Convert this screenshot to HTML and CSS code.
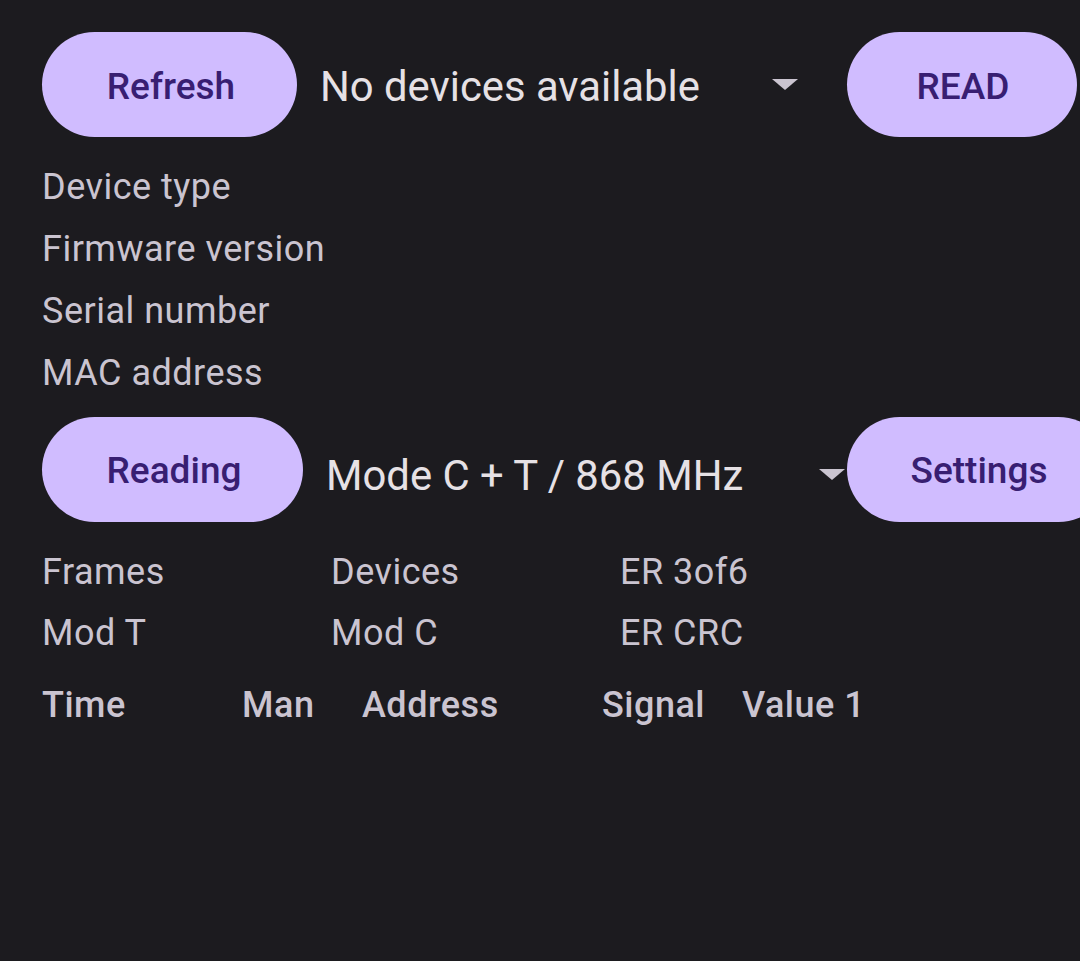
FILE: index.html
```html
<!DOCTYPE html>
<html lang="en">
<head>
<meta charset="utf-8">
<title>Reader</title>
<link rel="stylesheet" href="styles.css">
</head>
<body>
<div class="screen">
  <div class="toolbar toolbar-top">
    <button class="pill pill-refresh">Refresh</button>
    <div class="spinner spinner-devices">
      <span class="spinner-text">No devices available</span>
      <span class="caret"></span>
    </div>
    <button class="pill pill-read">READ</button>
  </div>

  <div class="info">
    <div class="info-line">Device type</div>
    <div class="info-line">Firmware version</div>
    <div class="info-line">Serial number</div>
    <div class="info-line">MAC address</div>
  </div>

  <div class="toolbar toolbar-mode">
    <button class="pill pill-reading">Reading</button>
    <div class="spinner spinner-mode">
      <span class="spinner-text spinner-text-mode">Mode C + T / 868 MHz</span>
      <span class="caret"></span>
    </div>
    <button class="pill pill-settings">Settings</button>
  </div>

  <div class="stats">
    <div class="stat">Frames</div>
    <div class="stat">Devices</div>
    <div class="stat">ER 3of6</div>
    <div class="stat">Mod T</div>
    <div class="stat">Mod C</div>
    <div class="stat">ER CRC</div>
  </div>

  <div class="table-head">
    <div class="th">Time</div>
    <div class="th">Man</div>
    <div class="th">Address</div>
    <div class="th">Signal</div>
    <div class="th">Value 1</div>
  </div>
</div>
</body>
</html>
```

FILE: styles.css
```css
html, body {
  margin: 0;
  padding: 0;
  background: #1c1b1f;
}

body {
  font-family: Roboto, "Noto Sans", "Liberation Sans", sans-serif;
  color: #cac4d0;
}

.screen {
  width: 1080px;
  height: 961px;
  overflow: hidden;
  box-sizing: border-box;
  padding: 32px 0 0 42px;
  background: #1c1b1f;
}

.toolbar {
  display: flex;
  align-items: center;
  width: max-content;
}

.pill {
  flex: none;
  box-sizing: border-box;
  height: 105px;
  border: none;
  border-radius: 53px;
  background: #d0bcff;
  color: #381e72;
  font-family: Roboto, "Noto Sans", "Liberation Sans", sans-serif;
  font-weight: 500;
  font-size: 37px;
  letter-spacing: 0;
  padding: 0;
  text-align: center;
}

.pill-refresh { width: 255px; padding: 4px 0 0 3px; }
.pill-read { width: 230px; padding: 4px 0 0 2px; }
.pill-reading { width: 261px; padding: 2px 0 0 3px; }
.pill-settings { width: 264px; padding-top: 2px; }

.spinner {
  flex: none;
  display: flex;
  align-items: center;
  box-sizing: border-box;
  height: 105px;
  padding-left: 23px;
}

.spinner-devices {
  width: 550px;
  padding-right: 49px;
  padding-top: 4px;
}

.spinner-devices .caret {
  margin-top: -4px;
}

.spinner-mode {
  width: 544px;
  padding-right: 2px;
  padding-top: 12px;
}

.spinner-text {
  flex: 1;
  font-size: 41.8px;
  color: #e6e1e5;
  white-space: nowrap;
}

.caret {
  flex: none;
  width: 0;
  height: 0;
  border-left: 13px solid transparent;
  border-right: 13px solid transparent;
  border-top: 11px solid #cac4d0;
}

.spinner-mode .caret {
  margin-top: -2px;
}

.info {
  margin-top: 19px;
}

.info-line {
  height: 62px;
  line-height: 62px;
  font-size: 36px;
  letter-spacing: 0.5px;
  color: #cac4d0;
  white-space: nowrap;
}

.toolbar-mode {
  margin-top: 13px;
}

.stats {
  margin-top: 20px;
  display: grid;
  grid-template-columns: 289px 289px 289px;
}

.stat {
  height: 61px;
  line-height: 61px;
  font-size: 36px;
  letter-spacing: 0.5px;
  color: #cac4d0;
  white-space: nowrap;
}

.table-head {
  margin-top: 10px;
  display: grid;
  grid-template-columns: 200px 120px 240px 140px auto;
}

.th {
  height: 62px;
  line-height: 62px;
  font-size: 36px;
  font-weight: 500;
  letter-spacing: 0.5px;
  color: #cac4d0;
  white-space: nowrap;
}
```
